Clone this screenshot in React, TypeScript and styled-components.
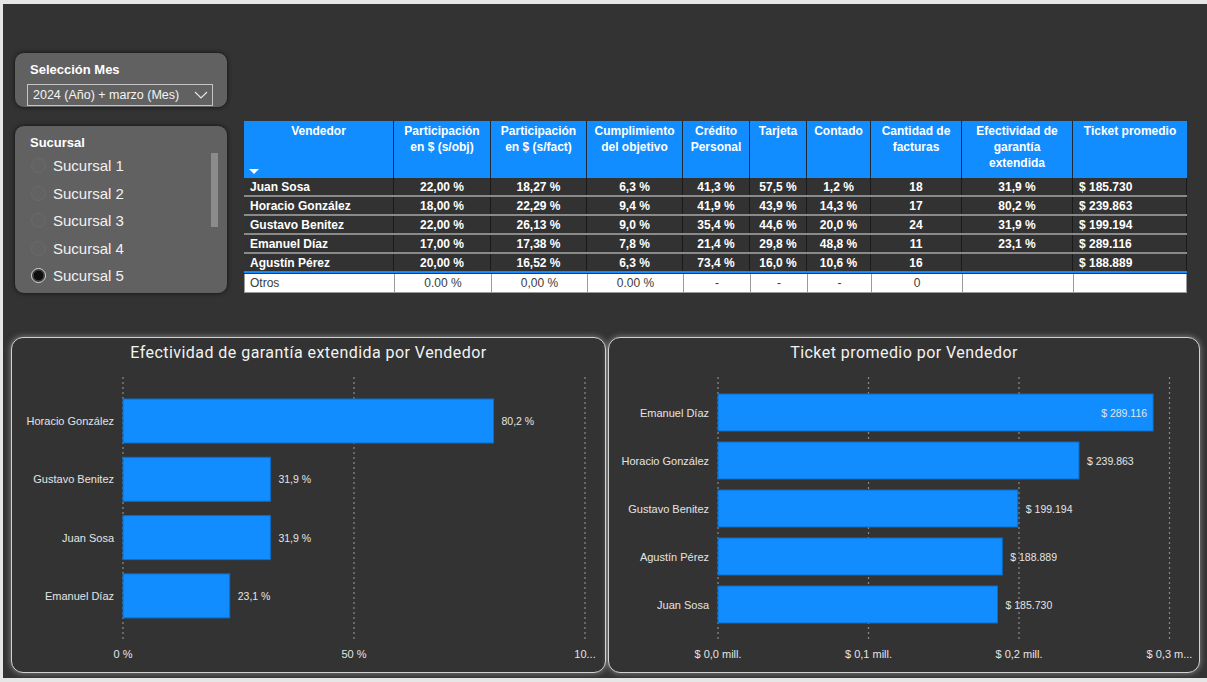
import React from 'react'
import styled, { createGlobalStyle } from 'styled-components'

const GlobalStyle = createGlobalStyle`
  body {
    margin: 0;
    background-color: #e6e6e6;
    font-family: 'Liberation Sans', Arial, sans-serif;
  }
`

const BLUE = '#118DFF'

const Canvas = styled.div`
	margin: 4px 0 0 3px;
	width: 1204px;
	height: 674px;
	background-color: #333333;
	overflow: hidden;
`

const TopArea = styled.div`
	display: flex;
	align-items: flex-start;
	padding: 48px 0 0 11px;
	height: 242px;
`

const SlicerColumn = styled.div`
	width: 214px;
	display: flex;
	flex-direction: column;
	gap: 17px;
`

const SlicerCard = styled.div<{ $height: number }>`
	box-sizing: border-box;
	height: ${p => p.$height}px;
	background-color: #616161;
	border: 1px solid #232323;
	border-radius: 10px;
	box-shadow: 0 0 4px rgba(0, 0, 0, 0.45);
	display: flex;
	flex-direction: column;
	padding: 7px 14px 0 15px;
	color: #fff;
`

const SlicerTitle = styled.div`
	font-size: 13px;
	font-weight: bold;
	line-height: 19px;
	color: #ffffff;
`

const Dropdown = styled.div`
	margin: 5px 0 0 -3px;
	height: 22px;
	box-sizing: border-box;
	border: 1px solid #c4c4c4;
	display: flex;
	align-items: center;
	justify-content: space-between;
	padding: 0 4px 0 5px;
	font-size: 12.5px;
	color: #f4f4f4;
`

const SlicerBody = styled.div`
	display: flex;
`

const OptionList = styled.div`
	flex: 1;
	display: flex;
	flex-direction: column;
	margin-left: 1px;
`

const Option = styled.div`
	height: 27.5px;
	display: flex;
	align-items: center;
	gap: 7px;
	font-size: 15px;
	color: #f2f2f2;
`

const Radio = styled.span<{ $checked?: boolean }>`
	box-sizing: border-box;
	width: 15px;
	height: 15px;
	border-radius: 50%;
	border: 1px solid ${p => (p.$checked ? '#d8d8d8' : '#6b6b6b')};
	background: ${p =>
		p.$checked ? 'radial-gradient(circle, #0e0e0e 0 4.5px, #3a3a3a 5px)' : '#626262'};
`

const ScrollTrack = styled.div`
	width: 7px;
	margin: 1px -5px 0 0;
`

const ScrollThumb = styled.div`
	height: 74px;
	background-color: #8b8b8b;
`

const Table = styled.div`
	margin: 69px 0 0 16px;
	width: 943px;
	font-size: 12px;
`

const COLS = '150px 97px 96px 96px 67px 57px 64px 91px 111px 114px'

const HeaderRow = styled.div`
	display: grid;
	grid-template-columns: ${COLS};
	height: 57px;
	background-color: ${BLUE};
`

const HeaderCell = styled.div`
	border-right: 1px solid #1d2a38;
	padding: 2px 4px 0;
	text-align: center;
	font-weight: bold;
	line-height: 16px;
	color: #ffffff;
	display: flex;
	flex-direction: column;
	justify-content: space-between;
	&:last-child {
		border-right: none;
	}
`

const SortArrow = styled.span`
	align-self: flex-start;
	margin: 0 0 4px 1px;
	width: 0;
	height: 0;
	border-left: 5px solid transparent;
	border-right: 5px solid transparent;
	border-top: 5px solid #ffffff;
`

const BodyRow = styled.div<{ $last?: boolean }>`
	display: grid;
	grid-template-columns: ${COLS};
	height: 19px;
	box-sizing: border-box;
	background-color: #323232;
	border-bottom: 2px solid ${p => (p.$last ? BLUE : '#8a8a8a')};
`

const Cell = styled.div<{ $align?: 'left' | 'center' }>`
	border-right: 1px solid #1a1a1a;
	padding: 1px 6px 0;
	text-align: ${p => p.$align ?? 'center'};
	font-weight: bold;
	line-height: 17px;
	color: #ffffff;
	white-space: nowrap;
	overflow: hidden;
`

const TotalRow = styled.div`
	display: grid;
	grid-template-columns: ${COLS};
	height: 19px;
	box-sizing: border-box;
	background-color: #ffffff;
	margin-top: 1px;
	border: 1px solid #9a9a9a;
	border-top: none;
`

const TotalCell = styled.div<{ $align?: 'left' | 'center' }>`
	border-right: 1px solid #9a9a9a;
	padding: 1px 5px 0;
	text-align: ${p => p.$align ?? 'center'};
	line-height: 17px;
	color: #3a3a3a;
	&:last-child {
		border-right: none;
	}
`

const ChartsRow = styled.div`
	display: flex;
	gap: 2px;
	padding: 43px 0 0 8px;
`

const ChartCard = styled.div<{ $width: number }>`
	box-sizing: border-box;
	width: ${p => p.$width}px;
	height: 336px;
	border: 1.5px solid #d2d2d2;
	border-radius: 12px;
	background-color: #333333;
	box-shadow: 0 0 6px rgba(210, 210, 210, 0.55);
	display: flex;
	flex-direction: column;
`

const ChartTitle = styled.div`
	height: 30px;
	line-height: 30px;
	padding-bottom: 3px;
	text-align: center;
	font-family: Roboto, 'Liberation Sans', sans-serif;
	font-size: 16px;
	letter-spacing: 0.45px;
	color: #f2f2f2;
`

const Grid = styled.line`
	stroke: #8a8a8a;
	stroke-width: 1.2;
	stroke-dasharray: 2 3;
`

const BarRect = styled.rect`
	fill: ${BLUE};
	stroke: #0b6fcc;
	stroke-width: 1;
`

const Label = styled.text`
	font-family: 'Liberation Sans', Arial, sans-serif;
	font-size: 11px;
	fill: #e4e4e4;
`

const ValueLabel = styled(Label)`
	font-size: 10.5px;
`

type BarItem = { name: string; value: number; label: string; inside?: boolean }

interface ChartProps {
	title: string
	width: number
	bars: BarItem[]
	max: number
	ticks: string[]
	plotLeft: number
	plotWidth: number
	barTop: number
	barHeight: number
	pitch: number
}

const BarChart: React.FC<ChartProps> = ({
	title,
	width,
	bars,
	max,
	ticks,
	plotLeft,
	plotWidth,
	barTop,
	barHeight,
	pitch,
}) => {
	const step = plotWidth / (ticks.length - 1)
	return (
		<ChartCard $width={width}>
			<ChartTitle>{title}</ChartTitle>
			<svg width={width - 3} height={300}>
				{ticks.map((_, i) => (
					<Grid key={i} x1={plotLeft + i * step} x2={plotLeft + i * step} y1={6} y2={270} />
				))}
				{bars.map((b, i) => {
					const y = barTop + i * pitch
					const w = (b.value / max) * plotWidth
					const mid = y + barHeight / 2 + 4
					return (
						<g key={b.name}>
							<Label x={plotLeft - 9} y={mid} textAnchor='end'>
								{b.name}
							</Label>
							<BarRect x={plotLeft} y={y} width={w} height={barHeight} />
							<ValueLabel
								x={b.inside ? plotLeft + w - 6 : plotLeft + w + 8}
								y={mid}
								textAnchor={b.inside ? 'end' : 'start'}
							>
								{b.label}
							</ValueLabel>
						</g>
					)
				})}
				{ticks.map((t, i) => (
					<Label key={t} x={plotLeft + i * step} y={287} textAnchor='middle'>
						{t}
					</Label>
				))}
			</svg>
		</ChartCard>
	)
}

const sellers = [
	['Juan Sosa', '22,00 %', '18,27 %', '6,3 %', '41,3 %', '57,5 %', '1,2 %', '18', '31,9 %', '$ 185.730'],
	['Horacio González', '18,00 %', '22,29 %', '9,4 %', '41,9 %', '43,9 %', '14,3 %', '17', '80,2 %', '$ 239.863'],
	['Gustavo Benitez', '22,00 %', '26,13 %', '9,0 %', '35,4 %', '44,6 %', '20,0 %', '24', '31,9 %', '$ 199.194'],
	['Emanuel Díaz', '17,00 %', '17,38 %', '7,8 %', '21,4 %', '29,8 %', '48,8 %', '11', '23,1 %', '$ 289.116'],
	['Agustín Pérez', '20,00 %', '16,52 %', '6,3 %', '73,4 %', '16,0 %', '10,6 %', '16', '', '$ 188.889'],
]

const headers = [
	'Participación en $ (s/obj)',
	'Participación en $ (s/fact)',
	'Cumplimiento del objetivo',
	'Crédito Personal',
	'Tarjeta',
	'Contado',
	'Cantidad de facturas',
	'Efectividad de garantía extendida',
	'Ticket promedio',
]

const others = ['Otros', '0.00 %', '0,00 %', '0.00 %', '-', '-', '-', '0', '', '']

const branches = ['Sucursal 1', 'Sucursal 2', 'Sucursal 3', 'Sucursal 4', 'Sucursal 5']

const warranty: BarItem[] = [
	{ name: 'Horacio González', value: 80.2, label: '80,2 %' },
	{ name: 'Gustavo Benitez', value: 31.9, label: '31,9 %' },
	{ name: 'Juan Sosa', value: 31.9, label: '31,9 %' },
	{ name: 'Emanuel Díaz', value: 23.1, label: '23,1 %' },
]

const tickets: BarItem[] = [
	{ name: 'Emanuel Díaz', value: 289116, label: '$ 289.116', inside: true },
	{ name: 'Horacio González', value: 239863, label: '$ 239.863' },
	{ name: 'Gustavo Benitez', value: 199194, label: '$ 199.194' },
	{ name: 'Agustín Pérez', value: 188889, label: '$ 188.889' },
	{ name: 'Juan Sosa', value: 185730, label: '$ 185.730' },
]

const App: React.FC = () => {
	return (
		<>
			<GlobalStyle />
			<Canvas>
				<TopArea>
					<SlicerColumn>
						<SlicerCard $height={56}>
							<SlicerTitle>Selección Mes</SlicerTitle>
							<Dropdown>
								<span>2024 (Año) + marzo (Mes)</span>
								<svg width='14' height='8' viewBox='0 0 14 8'>
									<polyline points='1,1 7,7 13,1' fill='none' stroke='#e8e8e8' strokeWidth='1.1' />
								</svg>
							</Dropdown>
						</SlicerCard>
						<SlicerCard $height={169}>
							<SlicerTitle>Sucursal</SlicerTitle>
							<SlicerBody>
								<OptionList>
									{branches.map((b, i) => (
										<Option key={b}>
											<Radio $checked={i === 4} />
											{b}
										</Option>
									))}
								</OptionList>
								<ScrollTrack>
									<ScrollThumb />
								</ScrollTrack>
							</SlicerBody>
						</SlicerCard>
					</SlicerColumn>

					<Table>
						<HeaderRow>
							<HeaderCell>
								Vendedor
								<SortArrow />
							</HeaderCell>
							{headers.map(h => (
								<HeaderCell key={h}>{h}</HeaderCell>
							))}
						</HeaderRow>
						{sellers.map((row, r) => (
							<BodyRow key={row[0]} $last={r === sellers.length - 1}>
								{row.map((v, i) => (
									<Cell key={i} $align={i === 0 || i === 9 ? 'left' : 'center'}>
										{v}
									</Cell>
								))}
							</BodyRow>
						))}
						<TotalRow>
							{others.map((v, i) => (
								<TotalCell key={i} $align={i === 0 ? 'left' : 'center'}>
									{v}
								</TotalCell>
							))}
						</TotalRow>
					</Table>
				</TopArea>

				<ChartsRow>
					<BarChart
						title='Efectividad de garantía extendida por Vendedor'
						width={595}
						bars={warranty}
						max={100}
						ticks={['0 %', '50 %', '10...']}
						plotLeft={111}
						plotWidth={462}
						barTop={28}
						barHeight={44}
						pitch={58.3}
					/>
					<BarChart
						title='Ticket promedio por Vendedor'
						width={592}
						bars={tickets}
						max={300000}
						ticks={['$ 0,0 mill.', '$ 0,1 mill.', '$ 0,2 mill.', '$ 0,3 m...']}
						plotLeft={109}
						plotWidth={451.5}
						barTop={23}
						barHeight={37}
						pitch={48}
					/>
				</ChartsRow>
			</Canvas>
		</>
	)
}

export default App
